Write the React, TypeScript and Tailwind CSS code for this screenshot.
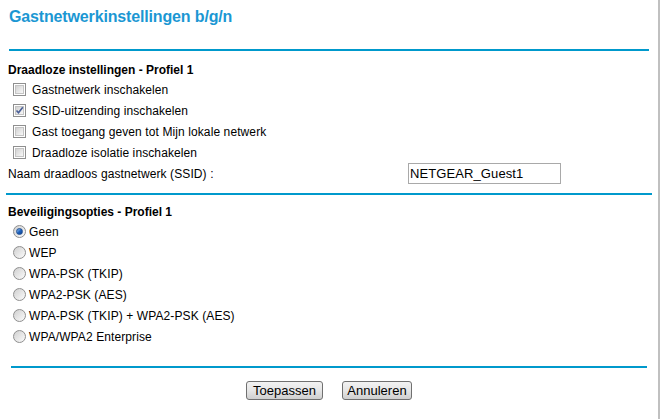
import React from "react";

function CheckBox({ checked }: { checked?: boolean }) {
  return (
    <div className="w-[13px] h-[13px] border border-[#8f8f8f] bg-white p-[1px] shrink-0">
      <div className="relative w-full h-full bg-gradient-to-br from-[#d2d2d2] to-[#f8f8f8] border border-[#c4c4c4]">
        {checked && (
          <svg viewBox="0 0 9 9" className="absolute left-[-1px] top-[-1px] w-[9px] h-[9px]">
            <path d="M1.5 4.5 L3.5 6.8 L7.8 1.2" fill="none" stroke="#4a5f97" strokeWidth="1.6" />
          </svg>
        )}
      </div>
    </div>
  );
}

function Radio({ checked }: { checked?: boolean }) {
  return (
    <div className="w-[13px] h-[13px] rounded-full border border-[#8f8f8f] bg-gradient-to-br from-[#d0d0d0] to-[#fbfbfb] flex items-center justify-center shrink-0">
      {checked && (
        <div className="w-[7px] h-[7px] rounded-full bg-gradient-to-br from-[#9cc7f0] via-[#1f64c0] to-[#0b3d8c] border border-[#204f93]" />
      )}
    </div>
  );
}

const cbItems = [
  { label: "Gastnetwerk inschakelen", checked: false },
  { label: "SSID-uitzending inschakelen", checked: true },
  { label: "Gast toegang geven tot Mijn lokale netwerk", checked: false },
  { label: "Draadloze isolatie inschakelen", checked: false },
];

const radioItems = [
  { label: "Geen", checked: true },
  { label: "WEP" },
  { label: "WPA-PSK (TKIP)" },
  { label: "WPA2-PSK (AES)" },
  { label: "WPA-PSK (TKIP) + WPA2-PSK (AES)" },
  { label: "WPA/WPA2 Enterprise" },
];

export default function App() {
  return (
    <div
      className="w-[660px] h-[419px] bg-white text-black border-r-2 border-[#c0c0c0] overflow-hidden"
      style={{ fontFamily: '"Liberation Sans", Arial, sans-serif' }}
    >
      <div className="h-[34px] flex items-center pl-[9px] text-[16px] font-bold tracking-[-0.15px] text-[#1b97d3]">
        Gastnetwerkinstellingen b/g/n
      </div>
      <div className="mt-[15px] ml-[9px] w-[640px] h-[2px] bg-[#0099cc]" />

      <div className="mt-[9px] h-[19px] flex items-center pl-[8px] text-[12px] font-bold">
        Draadloze instellingen - Profiel 1
      </div>
      {cbItems.map((c) => (
        <div key={c.label} className="h-[21px] flex items-center pl-[13px] text-[12px] tracking-[0.1px]">
          <CheckBox checked={c.checked} />
          <span className="ml-[6px]">{c.label}</span>
        </div>
      ))}
      <div className="h-[21px] flex items-center text-[12px] tracking-[0.1px]">
        <span className="pl-[8px] w-[408px]">Naam draadloos gastnetwerk (SSID) :</span>
        <input
          readOnly
          value="NETGEAR_Guest1"
          className="w-[153px] h-[21px] border border-[#a9a9a9] px-[1px] text-[13px] text-black outline-none"
          style={{ fontFamily: '"Liberation Sans", Arial, sans-serif' }}
        />
      </div>
      <div className="mt-[9px] ml-[6px] w-[646px] h-[2px] bg-[#0099cc]" />

      <div className="mt-[7px] h-[19px] flex items-center pl-[8px] text-[12px] font-bold">
        Beveiligingsopties - Profiel 1
      </div>
      {radioItems.map((r) => (
        <div key={r.label} className="h-[21px] flex items-center pl-[13px] text-[12px] tracking-[0.1px]">
          <Radio checked={r.checked} />
          <span className="ml-[3px]">{r.label}</span>
        </div>
      ))}
      <div className="mt-[19px] ml-[11px] w-[636px] h-[2px] bg-[#0099cc]" />

      <div className="mt-[13px] flex justify-center gap-[19px]">
        <button className="w-[77px] h-[19px] border border-[#707070] rounded-[3px] bg-gradient-to-b from-[#f2f2f2] via-[#e6e6e6] to-[#cfcfcf] text-[13px] leading-[17px] text-black">
          Toepassen
        </button>
        <button className="w-[70px] h-[19px] border border-[#707070] rounded-[3px] bg-gradient-to-b from-[#f2f2f2] via-[#e6e6e6] to-[#cfcfcf] text-[13px] leading-[17px] text-black">
          Annuleren
        </button>
      </div>
    </div>
  );
}
